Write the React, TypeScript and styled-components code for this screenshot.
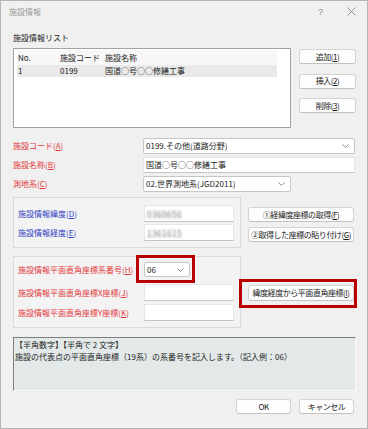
import React from "react";
import styled, { createGlobalStyle } from "styled-components";

const Global = createGlobalStyle`
  html, body { margin: 0; padding: 0; background: #ffffff; }
  body { font-family: "Noto Sans CJK JP", "Noto Sans", sans-serif; font-size: 8px; color: #1a1a1a; }
  * { box-sizing: border-box; }
`;

const Window = styled.div`
  width: 368px;
  height: 429px;
  border: 1px solid #b4b4b4;
  background: #f0f0f0;
  display: flex;
  flex-direction: column;
`;

const TitleBar = styled.div`
  height: 21px;
  display: flex;
  align-items: center;
  padding-left: 8px;
`;

const Title = styled.div`
  flex: 1;
  color: #9a9a9a;
  font-size: 8px;
  line-height: 12px;
`;

const CaptionButton = styled.div`
  width: 31px;
  height: 21px;
  display: flex;
  align-items: center;
  justify-content: center;
  color: #8a8a8a;
  font-size: 9px;
  font-family: "Liberation Sans", sans-serif;
`;

const Body = styled.div`
  padding: 0 11px 0 12px;
  display: flex;
  flex-direction: column;
`;

const SectionTitle = styled.div`
  margin-top: 10px;
  line-height: 12px;
  color: #1a1a1a;
`;

const ListRow = styled.div`
  margin-top: 4px;
  display: flex;
  align-items: flex-start;
`;

const ListBox = styled.div`
  width: 278px;
  height: 80px;
  border: 1px solid #a3a3a3;
  background: #ffffff;
  padding: 1px 13px 1px 3px;
  display: flex;
  flex-direction: column;
`;

const ListLine = styled.div<{ $header?: boolean }>`
  display: flex;
  height: ${(p) => (p.$header ? "15px" : "12px")};
  gap: ${(p) => (p.$header ? "1px" : "0")};
  background: ${(p) => (p.$header ? "#ffffff" : "#e9e9e9")};
`;

const Cell = styled.div<{ $w?: number; $header?: boolean; $pad?: number }>`
  ${(p) => (p.$w ? `width: ${p.$w}px;` : "flex: 1;")}
  padding-left: ${(p) => p.$pad ?? 3}px;
  line-height: ${(p) => (p.$header ? "15px" : "12px")};
  background: ${(p) => (p.$header ? "#f7f7f7" : "transparent")};
  white-space: nowrap;
  color: #1a1a1a;
`;

const SideColumn = styled.div<{ $ml: number; $pt: number; $gap: number }>`
  margin-left: ${(p) => p.$ml}px;
  padding-top: ${(p) => p.$pt}px;
  display: flex;
  flex-direction: column;
  gap: ${(p) => p.$gap}px;
`;

const Button = styled.div<{ $w: number; $h?: number }>`
  width: ${(p) => p.$w}px;
  height: ${(p) => p.$h ?? 15}px;
  background: #fdfdfd;
  border: 1px solid #d3d3d3;
  border-bottom-color: #c2c2c2;
  border-radius: 3px;
  display: flex;
  align-items: center;
  justify-content: center;
  line-height: 12px;
  color: #1a1a1a;
  white-space: nowrap;
  letter-spacing: -0.45px;
`;

const Key = styled.span`
  text-decoration: underline;
  text-underline-offset: 1px;
`;

const Form = styled.div`
  margin-top: 10px;
  display: flex;
  flex-direction: column;
  gap: 3px;
`;

const FormRow = styled.div<{ $h?: number; $mt?: number }>`
  display: flex;
  align-items: center;
  height: ${(p) => p.$h ?? 16}px;
  ${(p) => (p.$mt !== undefined ? `margin-top: ${p.$mt}px;` : "")}
`;

const Label = styled.div<{ $w: number; $tone: "red" | "blue" }>`
  width: ${(p) => p.$w}px;
  flex-shrink: 0;
  color: ${(p) => (p.$tone === "red" ? "#e2383c" : "#2f3fc2")};
  line-height: 12px;
  white-space: nowrap;
`;

const Combo = styled.div<{ $w: number; $h?: number }>`
  width: ${(p) => p.$w}px;
  height: ${(p) => p.$h ?? 16}px;
  background: #ffffff;
  border: 1px solid #c6c6c6;
  border-radius: 2px;
  display: flex;
  align-items: center;
  padding: 0 5px 0 2px;
  line-height: 12px;
  color: #1a1a1a;
`;

const ComboText = styled.div`
  flex: 1;
  white-space: nowrap;
`;

const TextBox = styled.div<{ $w: number; $h?: number }>`
  width: ${(p) => p.$w}px;
  height: ${(p) => p.$h ?? 16}px;
  background: #ffffff;
  border: 1px solid #e6e6e6;
  border-bottom-color: #c4c4c4;
  display: flex;
  align-items: center;
  padding-left: 2px;
  line-height: 12px;
  white-space: nowrap;
`;

const Blurred = styled.span`
  display: inline-block;
  color: #7a7a7a;
  filter: blur(1.1px);
  font-size: 8.5px;
  letter-spacing: 0.3px;
`;

const GroupRow = styled.div<{ $mt: number }>`
  margin-top: ${(p) => p.$mt}px;
  display: flex;
  align-items: flex-start;
`;

const Group = styled.div<{ $pt: number }>`
  width: 228px;
  border: 1px solid #dadada;
  background: #f3f3f3;
  padding: ${(p) => p.$pt}px 6px 6px 4px;
  display: flex;
  flex-direction: column;
`;

const Marked = styled.div`
  position: relative;
  display: flex;
`;

const Ring = styled.div<{ $l: number; $t: number; $r: number; $b: number }>`
  position: absolute;
  left: ${(p) => p.$l}px;
  top: ${(p) => p.$t}px;
  right: ${(p) => p.$r}px;
  bottom: ${(p) => p.$b}px;
  border: 3px solid #b80000;
  pointer-events: none;
`;

const DescBox = styled.div`
  margin-top: 9px;
  width: 343px;
  height: 54px;
  background: #e3e9e9;
  border-top: 1px solid #7e7e7e;
  border-left: 1px solid #7e7e7e;
  border-right: 1px solid #fafafa;
  border-bottom: 1px solid #fafafa;
  padding: 1px 1px;
  line-height: 12px;
  color: #222222;
  white-space: nowrap;
`;

const Footer = styled.div`
  margin-top: 8px;
  display: flex;
  justify-content: flex-end;
  gap: 8px;
  padding-right: 2px;
`;

const Chevron = () => (
  <svg width="7" height="4" viewBox="0 0 7 4">
    <polyline points="0.5,0.5 3.5,3.5 6.5,0.5" fill="none" stroke="#7a7a7a" strokeWidth="0.9" />
  </svg>
);

const CloseGlyph = () => (
  <svg width="9" height="9" viewBox="0 0 9 9">
    <path d="M0.5 0.5 L8.5 8.5 M8.5 0.5 L0.5 8.5" stroke="#8a8a8a" strokeWidth="0.9" />
  </svg>
);

export default function App() {
  return (
    <>
      <Global />
      <Window>
        <TitleBar>
          <Title>施設情報</Title>
          <CaptionButton>?</CaptionButton>
          <CaptionButton>
            <CloseGlyph />
          </CaptionButton>
        </TitleBar>
        <Body>
          <SectionTitle>施設情報リスト</SectionTitle>
          <ListRow>
            <ListBox>
              <ListLine $header>
                <Cell $header $w={39} $pad={1}>No.</Cell>
                <Cell $header $w={44}>施設コード</Cell>
                <Cell $header>施設名称</Cell>
              </ListLine>
              <ListLine>
                <Cell $w={40} $pad={1}>1</Cell>
                <Cell $w={45}>0199</Cell>
                <Cell>国道○号○○修繕工事</Cell>
              </ListLine>
            </ListBox>
            <SideColumn $ml={8} $pt={1} $gap={9.5}>
              <Button $w={57}>追加(<Key>1</Key>)</Button>
              <Button $w={57}>挿入(<Key>2</Key>)</Button>
              <Button $w={57}>削除(<Key>3</Key>)</Button>
            </SideColumn>
          </ListRow>

          <Form>
            <FormRow>
              <Label $w={130} $tone="red">施設コード(<Key>A</Key>)</Label>
              <Combo $w={212}>
                <ComboText>0199.その他(道路分野)</ComboText>
                <Chevron />
              </Combo>
            </FormRow>
            <FormRow>
              <Label $w={130} $tone="red">施設名称(<Key>B</Key>)</Label>
              <TextBox $w={212}>国道○号○○修繕工事</TextBox>
            </FormRow>
            <FormRow>
              <Label $w={130} $tone="red">測地系(<Key>C</Key>)</Label>
              <Combo $w={148}>
                <ComboText>02.世界測地系(JGD2011)</ComboText>
                <Chevron />
              </Combo>
            </FormRow>
          </Form>

          <GroupRow $mt={5}>
            <Group $pt={7}>
              <FormRow $h={17}>
                <Label $w={126} $tone="blue">施設情報緯度(<Key>D</Key>)</Label>
                <TextBox $w={90} $h={17}><Blurred>0360656</Blurred></TextBox>
              </FormRow>
              <FormRow $h={17} $mt={2}>
                <Label $w={126} $tone="blue">施設情報経度(<Key>E</Key>)</Label>
                <TextBox $w={90} $h={17}><Blurred>1361615</Blurred></TextBox>
              </FormRow>
            </Group>
            <SideColumn $ml={7} $pt={10} $gap={5}>
              <Button $w={106}>①経緯度座標の取得(<Key>F</Key>)</Button>
              <Button $w={106}>②取得した座標の貼り付け(<Key>G</Key>)</Button>
            </SideColumn>
          </GroupRow>

          <GroupRow $mt={8}>
            <Group $pt={5}>
              <FormRow $h={15}>
                <Label $w={126} $tone="red">施設情報平面直角座標系番号(<Key>H</Key>)</Label>
                <Marked>
                  <Combo $w={46} $h={15}>
                    <ComboText>06</ComboText>
                    <Chevron />
                  </Combo>
                  <Ring $l={-8} $t={-7} $r={-5} $b={-6} />
                </Marked>
              </FormRow>
              <FormRow $h={17} $mt={7}>
                <Label $w={126} $tone="red">施設情報平面直角座標X座標(<Key>J</Key>)</Label>
                <TextBox $w={90} $h={17} />
              </FormRow>
              <FormRow $h={17} $mt={3}>
                <Label $w={126} $tone="red">施設情報平面直角座標Y座標(<Key>K</Key>)</Label>
                <TextBox $w={90} $h={17} />
              </FormRow>
            </Group>
            <SideColumn $ml={7} $pt={29} $gap={0}>
              <Marked>
                <Button $w={106} $h={16}>緯度経度から平面直角座標(<Key>I</Key>)</Button>
                <Ring $l={-9} $t={-6} $r={-3} $b={-7} />
              </Marked>
            </SideColumn>
          </GroupRow>

          <DescBox>
            【半角数字】【半角で 2 文字】
            <br />
            施設の代表点の平面直角座標（19系）の系番号を記入します。（記入例：06）
          </DescBox>

          <Footer>
            <Button $w={55}>OK</Button>
            <Button $w={55}>キャンセル</Button>
          </Footer>
        </Body>
      </Window>
    </>
  );
}
